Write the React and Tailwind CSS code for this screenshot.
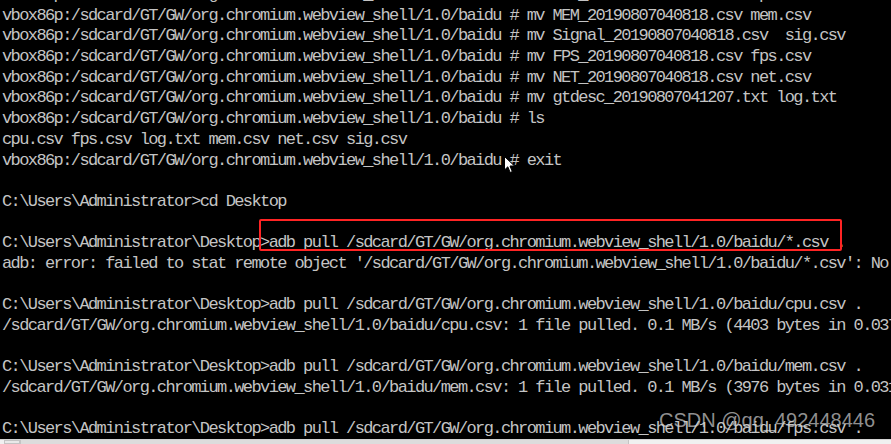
const shell = 'vbox86p:/sdcard/GT/GW/org.chromium.webview_shell/1.0/baidu #';
const desk = 'C:\\Users\\Administrator\\Desktop>';
const remote = '/sdcard/GT/GW/org.chromium.webview_shell/1.0/baidu';

const lines = [
    `${shell} mv CPU_20190807040818.csv cpu.csv`,
    `${shell} mv MEM_20190807040818.csv mem.csv`,
    `${shell} mv Signal_20190807040818.csv  sig.csv`,
    `${shell} mv FPS_20190807040818.csv fps.csv`,
    `${shell} mv NET_20190807040818.csv net.csv`,
    `${shell} mv gtdesc_20190807041207.txt log.txt`,
    `${shell} ls`,
    'cpu.csv fps.csv log.txt mem.csv net.csv sig.csv',
    `${shell} exit`,
    '',
    'C:\\Users\\Administrator>cd Desktop',
    '',
    `${desk}adb pull ${remote}/*.csv .`,
    `adb: error: failed to stat remote object '${remote}/*.csv': No such file or directory`,
    '',
    `${desk}adb pull ${remote}/cpu.csv .`,
    `${remote}/cpu.csv: 1 file pulled. 0.1 MB/s (4403 bytes in 0.037s)`,
    '',
    `${desk}adb pull ${remote}/mem.csv .`,
    `${remote}/mem.csv: 1 file pulled. 0.1 MB/s (3976 bytes in 0.031s)`,
    '',
    `${desk}adb pull ${remote}/fps.csv .`,
];

function Pointer() {
    return (
        <svg width="12" height="18" viewBox="0 0 12 18" className="absolute left-[504px] top-[156px]">
            <path d="M0.5 0.5 L0.5 14 L3.8 10.8 L6.2 16.5 L8.3 15.6 L6 10 L10.5 10 Z" fill="#ffffff" stroke="#000000" strokeWidth="1" />
        </svg>
    );
}

export default function App() {
    return (
        <div className="w-[891px] h-[444px] overflow-hidden flex bg-[#f0f0f0]">
            {/* window frame edge */}
            <div className="w-[4px] bg-[#dce7f3]" />

            <div className="flex-1 flex flex-col">
                {/* Console */}
                <div className="relative h-[439px] bg-black overflow-hidden">
                    <div className="-mt-[15px] pl-[2px] font-['Liberation_Mono',monospace] text-[17px] leading-[20.7px] tracking-[-1.6px] text-[#c4c4c4] whitespace-pre">
                        {lines.map((line, i) => (
                            <div key={i} className="h-[20.7px]">{line}</div>
                        ))}
                    </div>

                    {/* highlight box */}
                    <div className="absolute left-[259px] top-[219px] w-[583px] h-[32px] border-2 border-[#ff2424] rounded-[2px]" />

                    <Pointer />

                    {/* watermark */}
                    <div className="absolute left-[659px] top-[406px] font-['Liberation_Sans',sans-serif] text-[20px] leading-[28px] text-[#d0d0d0]/70">
                        CSDN @qq_492448446
                    </div>
                </div>

                {/* Horizontal scrollbar */}
                <div className="flex-1 flex border-t border-[#d4d4d4] bg-[#f0f0f0]">
                    <div className="ml-[4px] w-[16px] border border-[#c4c4c4] bg-[#e9e9e9]" />
                    <div className="w-[609px] border-x border-[#c4c4c4] bg-[#dcdcdc]" />
                </div>
            </div>

            {/* Vertical scrollbar */}
            <div className="relative w-[10px] border-l-2 border-[#f7f7f7] bg-[#ececec]">
                <div className="absolute left-[2px] top-[429px] w-0 h-0 border-x-[3px] border-x-transparent border-t-[3px] border-t-[#606060]" />
            </div>
        </div>
    );
}
